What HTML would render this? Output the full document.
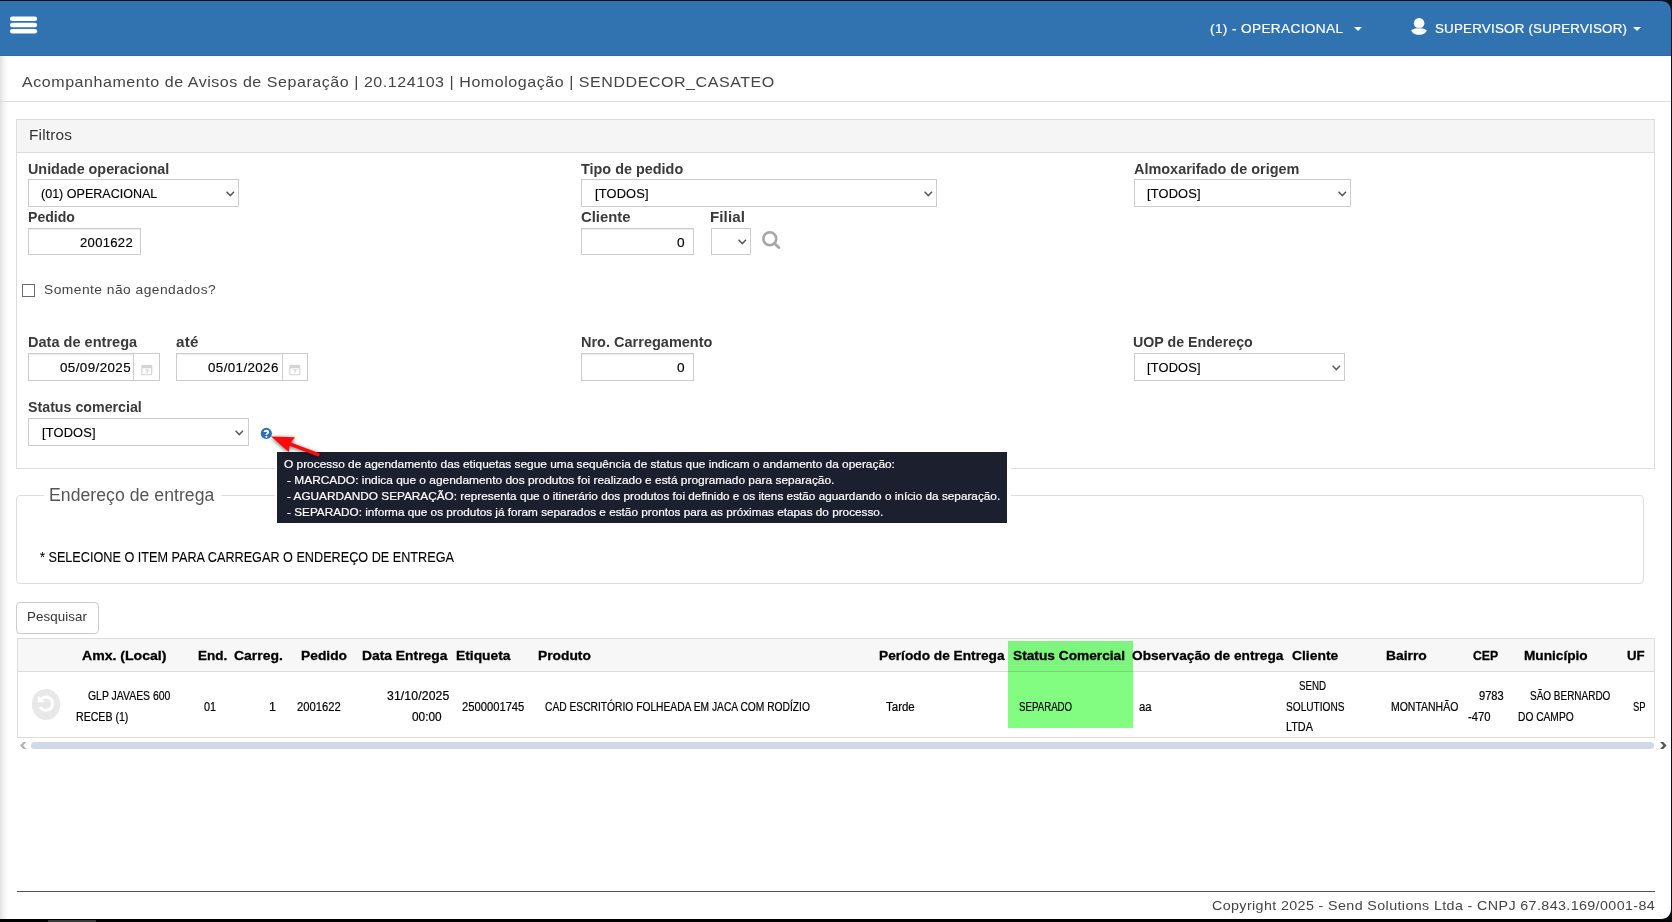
<!DOCTYPE html>
<html lang="pt-br"><head><meta charset="utf-8"><title>Acompanhamento de Avisos de Separação</title>
<style>
html,body{margin:0;padding:0;}
body{width:1672px;height:922px;overflow:hidden;position:relative;background:#fff;font-family:"Liberation Sans",sans-serif;}
.a{position:absolute;box-sizing:border-box;}
.t{position:absolute;white-space:pre;line-height:20px;height:20px;transform-origin:0 50%;font-family:"Liberation Sans",sans-serif;}
.inp{position:absolute;box-sizing:border-box;border:1px solid #ccc;background:#fff;box-shadow:inset 0 1px 1px rgba(0,0,0,.075);}
.sel{position:absolute;box-sizing:border-box;border:1px solid #ccc;background:#fff;}
svg{position:absolute;overflow:visible;}

</style></head><body>
<!-- left shadow -->
<div class="a" style="left:0;top:56px;width:9px;height:863px;background:linear-gradient(to right,#e1e1e1,#f5f5f5 45%,#fff);"></div>
<!-- navbar -->
<div class="a" style="left:0;top:0;width:1672px;height:56px;background:#3173b0;border-bottom:1px solid #2e6da4;"></div>
<!-- hamburger -->
<svg style="left:0;top:0" width="50" height="50"><rect x="10" y="16.4" width="27.1" height="4.6" rx="2.3" fill="#fff"/><rect x="10" y="22.8" width="27.1" height="4.5" rx="2.25" fill="#fff"/><rect x="10" y="29.1" width="27.1" height="4.5" rx="2.25" fill="#fff"/></svg>
<!-- carets -->
<svg style="left:1354.3px;top:26.8px" width="8" height="4"><path d="M0 0H8L4 4Z" fill="#fff"/></svg>
<svg style="left:1633.3px;top:26.8px" width="8" height="4"><path d="M0 0H8L4 4Z" fill="#fff"/></svg>
<!-- user icon -->
<svg style="left:1411px;top:17px" width="16" height="18" viewBox="0 0 16 18"><circle cx="8.1" cy="6.2" r="5.3" fill="#fff"/><path d="M0.2 13.3C2 11.8 4.5 10.9 8 10.9S14 11.8 15.8 13.3C15 16 12.5 17.8 8 17.8S1 16 0.2 13.3Z" fill="#fff"/><path d="M3.2 9.9C5 11.6 11 11.6 12.8 9.9" stroke="#3173b0" stroke-width="0.9" fill="none" opacity=".55"/></svg>
<!-- title rule -->
<div class="a" style="left:0;top:101px;width:1671px;height:1px;background:#ddd;"></div>
<!-- Filtros panel -->
<div class="a" style="left:16px;top:119px;width:1639px;height:350px;border:1px solid #ddd;background:#fff;"></div>
<div class="a" style="left:17px;top:120px;width:1637px;height:33px;background:#f5f5f5;border-bottom:1px solid #ddd;"></div>
<!-- row 1 -->
<div class="sel" style="left:28px;top:179px;width:211px;height:28px;"></div>
<div class="sel" style="left:581px;top:179px;width:356px;height:28px;"></div>
<div class="sel" style="left:1134px;top:179px;width:217px;height:28px;"></div>
<!-- row 2 -->
<div class="inp" style="left:28px;top:228px;width:113px;height:27px;"></div>
<div class="inp" style="left:581px;top:228px;width:113px;height:27px;"></div>
<div class="sel" style="left:711px;top:228px;width:40px;height:27px;"></div>
<!-- checkbox -->
<div class="a" style="left:22px;top:284px;width:13px;height:13px;border:1px solid #6a6a6a;border-radius:0.5px;background:#fff;"></div>
<!-- row 3 -->
<div class="inp" style="left:28px;top:353px;width:132px;height:28px;"></div>
<div class="a" style="left:133px;top:354px;width:26px;height:26px;background:#fff;border-left:1px solid #ccc;"></div>
<div class="inp" style="left:176px;top:353px;width:132px;height:28px;"></div>
<div class="a" style="left:282px;top:354px;width:25px;height:26px;background:#fff;border-left:1px solid #ccc;"></div>
<div class="inp" style="left:581px;top:353px;width:113px;height:28px;"></div>
<div class="sel" style="left:1134px;top:353px;width:211px;height:28px;"></div>
<!-- row 4 -->
<div class="sel" style="left:28px;top:418px;width:221px;height:28px;"></div>
<!-- chevrons -->
<svg class="chev" style="left:226px;top:191px" width="9" height="6"><path d="M0.6 0.8L4.3 4.6L8 0.8" stroke="#5a5a5a" stroke-width="1.45" fill="none"/></svg>
<svg class="chev" style="left:923.6px;top:191px" width="9" height="6"><path d="M0.6 0.8L4.3 4.6L8 0.8" stroke="#5a5a5a" stroke-width="1.45" fill="none"/></svg>
<svg class="chev" style="left:1337.8px;top:191px" width="9" height="6"><path d="M0.6 0.8L4.3 4.6L8 0.8" stroke="#5a5a5a" stroke-width="1.45" fill="none"/></svg>
<svg class="chev" style="left:737.6px;top:239px" width="9" height="6"><path d="M0.6 0.8L4.3 4.6L8 0.8" stroke="#5a5a5a" stroke-width="1.45" fill="none"/></svg>
<svg class="chev" style="left:1331.6px;top:365px" width="9" height="6"><path d="M0.6 0.8L4.3 4.6L8 0.8" stroke="#5a5a5a" stroke-width="1.45" fill="none"/></svg>
<svg class="chev" style="left:235.4px;top:430px" width="9" height="6"><path d="M0.6 0.8L4.3 4.6L8 0.8" stroke="#5a5a5a" stroke-width="1.45" fill="none"/></svg>
<!-- magnifier -->
<svg style="left:760px;top:229px" width="22" height="22" viewBox="0 0 22 22"><circle cx="9.8" cy="9.7" r="6.45" stroke="#a9a6ab" stroke-width="2.6" fill="none"/><path d="M14.6 14.5L18.8 18.5" stroke="#a9a6ab" stroke-width="2.9" stroke-linecap="round"/></svg>
<!-- calendar icons -->
<svg style="left:140.6px;top:363.7px" width="11.6" height="11.6" viewBox="0 0 12 12"><rect x="0.9" y="1.7" width="10.2" height="9.4" rx="0.6" fill="#fff" stroke="#d2d2d2" stroke-width="1.1"/><rect x="0.9" y="1.7" width="10.2" height="2.7" fill="#d4d4d4"/><rect x="2.7" y="0.5" width="1.7" height="2.2" rx="0.6" fill="#d8d8d8"/><rect x="7.6" y="0.5" width="1.7" height="2.2" rx="0.6" fill="#d8d8d8"/><path d="M4.4 6.1H7.5L5.7 9.6" stroke="#d6d6d6" stroke-width="1.1" fill="none"/></svg>
<svg style="left:288.7px;top:363.7px" width="11.6" height="11.6" viewBox="0 0 12 12"><rect x="0.9" y="1.7" width="10.2" height="9.4" rx="0.6" fill="#fff" stroke="#d2d2d2" stroke-width="1.1"/><rect x="0.9" y="1.7" width="10.2" height="2.7" fill="#d4d4d4"/><rect x="2.7" y="0.5" width="1.7" height="2.2" rx="0.6" fill="#d8d8d8"/><rect x="7.6" y="0.5" width="1.7" height="2.2" rx="0.6" fill="#d8d8d8"/><path d="M4.4 6.1H7.5L5.7 9.6" stroke="#d6d6d6" stroke-width="1.1" fill="none"/></svg>
<!-- help icon -->
<svg style="left:260px;top:427px" width="13" height="13" viewBox="0 0 13 13"><circle cx="6.3" cy="6.4" r="5.6" fill="#2d72b3"/><path d="M4.5 5.1C4.5 3.3 8.2 3.3 8.2 5.2C8.2 6.5 6.4 6.4 6.4 7.8" stroke="#fff" stroke-width="1.8" fill="none"/><circle cx="6.4" cy="9.8" r="1" fill="#fff"/></svg>
<!-- fieldset -->
<div class="a" style="left:16px;top:495px;width:1628px;height:89px;border:1px solid #ddd;border-radius:4px;"></div>
<div class="a" style="left:43.5px;top:494px;width:177px;height:3px;background:#fff;"></div>
<!-- Pesquisar button -->
<div class="a" style="left:16px;top:602px;width:83px;height:32px;border:1px solid #ccc;border-radius:4px;background:#fff;"></div>
<!-- table -->
<div class="a" style="left:17px;top:638px;width:1638px;height:100px;border:1px solid #ddd;background:#fff;"></div>
<div class="a" style="left:18px;top:639px;width:1636px;height:33px;background:#f7f7f7;border-bottom:1px solid #ddd;"></div>
<!-- green highlight -->
<div class="a" style="left:1008px;top:641px;width:125px;height:87px;background:#82fd82;mix-blend-mode:multiply;"></div>
<!-- undo icon -->
<svg style="left:31px;top:688px" width="30" height="33" viewBox="0 0 30 33"><ellipse cx="15" cy="16.5" rx="14.1" ry="15.6" fill="#e8e8e8"/><path d="M8.8 13.3A6.6 6.6 0 1 1 9.2 18.9" stroke="#fff" stroke-width="3" fill="none"/><path d="M6.9 7.6V14.2H13.7Z" fill="#fff"/></svg>
<!-- scrollbar -->
<div class="a" style="left:31px;top:742px;width:1623px;height:7px;border-radius:3.5px;background:#d0dae4;"></div>
<svg style="left:20px;top:742px" width="7" height="7"><path d="M6.4 0H3.3L0 3.5L3.3 7H6.4L3.1 3.5Z" fill="#b2b2b2"/></svg>
<svg style="left:1659.6px;top:742px" width="7" height="7"><path d="M0 0H3.2L6.6 3.5L3.2 7H0L3.4 3.5Z" fill="#555"/></svg>
<!-- footer rule -->
<div class="a" style="left:17px;top:891px;width:1638px;height:1px;background:#555;"></div>
<!-- tooltip -->
<div class="a" style="left:275px;top:452px;width:736px;height:71px;background:#fff;"></div>
<div class="a" style="left:277px;top:452px;width:730px;height:70.6px;background:#1c1f2e;"></div>
<!-- red arrow -->
<svg style="left:0;top:0;filter:drop-shadow(0.5px 1.5px 2.2px rgba(0,0,0,.6))" width="400" height="500" viewBox="0 0 400 500"><path d="M271.1 436.5L295 437.3L290.8 442.6L318.6 453.1A1.7 1.7 0 0 1 317.4 456.3L289.4 445.7L288.8 452Z" fill="#ff0a0a"/></svg>
<!-- window frame -->
<div class="a" style="left:0;top:0;width:1672px;height:1px;background:#0c0f1c;"></div>
<div class="a" style="left:0;top:919px;width:1672px;height:3px;background:#000;"></div>
<div class="a" style="left:48px;top:920px;width:48px;height:2px;background:#3a3a3a;"></div>
<div class="a" style="left:1671px;top:0;width:1px;height:922px;background:#0c0f1c;"></div>
<svg style="left:1661px;top:0" width="11" height="11"><path d="M0 0H11V11H10C10 5 6 1 0 1Z" fill="#0c0f1c"/></svg>
<svg style="left:1661px;top:909px" width="11" height="11"><path d="M11 0V11H0V10C6 10 10 6 10 0Z" fill="#0a0c16"/></svg>

<div class="t" style="left:1210.06px;top:19px;font-size:13px;color:#fff;-webkit-text-stroke:0.2px #fff;letter-spacing:0.348px;transform:scaleX(1.0485);">(1) - OPERACIONAL</div>
<div class="t" style="left:1435.40px;top:19px;font-size:13px;color:#fff;-webkit-text-stroke:0.2px #fff;letter-spacing:0.215px;transform:scaleX(1.0268);">SUPERVISOR (SUPERVISOR)</div>
<div class="t" style="left:21.57px;top:72px;font-size:15px;color:#444;letter-spacing:0.513px;transform:scaleX(1.0679);">Acompanhamento de Avisos de Separação | 20.124103 | Homologação | SENDDECOR_CASATEO</div>
<div class="t" style="left:28.74px;top:125px;font-size:15px;color:#333;letter-spacing:0.165px;transform:scaleX(1.0260);">Filtros</div>
<div class="t" style="left:27.84px;top:159px;font-size:15px;color:#3a3a3a;font-weight:700;transform:scaleX(0.9568);">Unidade operacional</div>
<div class="t" style="left:581.34px;top:159px;font-size:15px;color:#3a3a3a;font-weight:700;transform:scaleX(0.9608);">Tipo de pedido</div>
<div class="t" style="left:1133.54px;top:159px;font-size:15px;color:#3a3a3a;font-weight:700;transform:scaleX(0.9630);">Almoxarifado de origem</div>
<div class="t" style="left:27.76px;top:207px;font-size:15px;color:#3a3a3a;font-weight:700;transform:scaleX(0.9396);">Pedido</div>
<div class="t" style="left:580.89px;top:207px;font-size:15px;color:#3a3a3a;font-weight:700;transform:scaleX(0.9900);">Cliente</div>
<div class="t" style="left:710.39px;top:207px;font-size:15px;color:#3a3a3a;font-weight:700;letter-spacing:0.067px;transform:scaleX(1.0106);">Filial</div>
<div class="t" style="left:27.73px;top:332px;font-size:15px;color:#3a3a3a;font-weight:700;transform:scaleX(0.9701);">Data de entrega</div>
<div class="t" style="left:175.85px;top:332px;font-size:15px;color:#3a3a3a;font-weight:700;letter-spacing:0.188px;transform:scaleX(1.0184);">até</div>
<div class="t" style="left:580.53px;top:332px;font-size:15px;color:#3a3a3a;font-weight:700;transform:scaleX(0.9673);">Nro. Carregamento</div>
<div class="t" style="left:1133.15px;top:332px;font-size:15px;color:#3a3a3a;font-weight:700;transform:scaleX(0.9468);">UOP de Endereço</div>
<div class="t" style="left:28.29px;top:397px;font-size:15px;color:#3a3a3a;font-weight:700;transform:scaleX(0.9480);">Status comercial</div>
<div class="t" style="left:41.20px;top:184px;font-size:12.6px;color:#000;-webkit-text-stroke:0.15px #000;transform:scaleX(0.9955);">(01) OPERACIONAL</div>
<div class="t" style="left:594.56px;top:184px;font-size:12.6px;color:#000;-webkit-text-stroke:0.15px #000;letter-spacing:0.162px;transform:scaleX(1.0199);">[TODOS]</div>
<div class="t" style="left:1147.46px;top:184px;font-size:12.6px;color:#000;-webkit-text-stroke:0.15px #000;letter-spacing:0.162px;transform:scaleX(1.0199);">[TODOS]</div>
<div class="t" style="left:79.52px;top:233px;font-size:12.6px;color:#000;-webkit-text-stroke:0.15px #000;letter-spacing:0.288px;transform:scaleX(1.0374);">2001622</div>
<div class="t" style="left:677.25px;top:233px;font-size:12.6px;color:#000;-webkit-text-stroke:0.15px #000;transform:scaleX(1.0839);">0</div>
<div class="t" style="left:59.86px;top:358px;font-size:12.6px;color:#000;-webkit-text-stroke:0.15px #000;letter-spacing:0.395px;transform:scaleX(1.0607);">05/09/2025</div>
<div class="t" style="left:208.16px;top:358px;font-size:12.6px;color:#000;-webkit-text-stroke:0.15px #000;letter-spacing:0.381px;transform:scaleX(1.0585);">05/01/2026</div>
<div class="t" style="left:677.25px;top:358px;font-size:12.6px;color:#000;-webkit-text-stroke:0.15px #000;transform:scaleX(1.0839);">0</div>
<div class="t" style="left:1147.46px;top:358px;font-size:12.6px;color:#000;-webkit-text-stroke:0.15px #000;letter-spacing:0.162px;transform:scaleX(1.0199);">[TODOS]</div>
<div class="t" style="left:41.76px;top:423px;font-size:12.6px;color:#000;-webkit-text-stroke:0.15px #000;letter-spacing:0.162px;transform:scaleX(1.0199);">[TODOS]</div>
<div class="t" style="left:44.07px;top:280px;font-size:13px;color:#444;letter-spacing:0.429px;transform:scaleX(1.0632);">Somente não agendados?</div>
<div class="t" style="left:48.76px;top:485px;font-size:17.5px;color:#555;letter-spacing:0.052px;transform:scaleX(1.0058);">Endereço de entrega</div>
<div class="t" style="left:39.64px;top:547px;font-size:15.5px;color:#000;-webkit-text-stroke:0.1px #000;transform:scaleX(0.8164);">* SELECIONE O ITEM PARA CARREGAR O ENDEREÇO DE ENTREGA</div>
<div class="t" style="left:27.01px;top:607px;font-size:13.2px;color:#333;letter-spacing:0.077px;transform:scaleX(1.0109);">Pesquisar</div>
<div class="t" style="left:283.65px;top:454px;font-size:11px;color:#fff;-webkit-text-stroke:0.2px #fff;transform:scaleX(1.0800);">O processo de agendamento das etiquetas segue uma sequência de status que indicam o andamento da operação:</div>
<div class="t" style="left:287.28px;top:470px;font-size:11px;color:#fff;-webkit-text-stroke:0.2px #fff;transform:scaleX(1.0825);">- MARCADO: indica que o agendamento dos produtos foi realizado e está programado para separação.</div>
<div class="t" style="left:287.28px;top:486px;font-size:11px;color:#fff;-webkit-text-stroke:0.2px #fff;transform:scaleX(1.0714);">- AGUARDANDO SEPARAÇÃO: representa que o itinerário dos produtos foi definido e os itens estão aguardando o início da separação.</div>
<div class="t" style="left:287.28px;top:502px;font-size:11px;color:#fff;-webkit-text-stroke:0.2px #fff;transform:scaleX(1.0695);">- SEPARADO: informa que os produtos já foram separados e estão prontos para as próximas etapas do processo.</div>
<div class="t" style="left:81.91px;top:646px;font-size:13px;color:#000;font-weight:700;-webkit-text-stroke:0.3px #000;transform:scaleX(1.0822);">Amx. (Local)</div>
<div class="t" style="left:197.65px;top:646px;font-size:13px;color:#000;font-weight:700;-webkit-text-stroke:0.3px #000;transform:scaleX(1.0372);">End.</div>
<div class="t" style="left:234.49px;top:646px;font-size:13px;color:#000;font-weight:700;-webkit-text-stroke:0.3px #000;transform:scaleX(1.0743);">Carreg.</div>
<div class="t" style="left:301.44px;top:646px;font-size:13px;color:#000;font-weight:700;-webkit-text-stroke:0.3px #000;transform:scaleX(1.0623);">Pedido</div>
<div class="t" style="left:362.33px;top:646px;font-size:13px;color:#000;font-weight:700;-webkit-text-stroke:0.3px #000;transform:scaleX(1.0650);">Data Entrega</div>
<div class="t" style="left:455.54px;top:646px;font-size:13px;color:#000;font-weight:700;-webkit-text-stroke:0.3px #000;transform:scaleX(1.0628);">Etiqueta</div>
<div class="t" style="left:538.24px;top:646px;font-size:13px;color:#000;font-weight:700;-webkit-text-stroke:0.3px #000;transform:scaleX(1.0605);">Produto</div>
<div class="t" style="left:879.14px;top:646px;font-size:13px;color:#000;font-weight:700;-webkit-text-stroke:0.3px #000;transform:scaleX(1.0538);">Período de Entrega</div>
<div class="t" style="left:1013.06px;top:646px;font-size:13px;color:#000;font-weight:700;-webkit-text-stroke:0.3px #000;transform:scaleX(1.0551);">Status Comercial</div>
<div class="t" style="left:1132.20px;top:646px;font-size:13px;color:#000;font-weight:700;-webkit-text-stroke:0.3px #000;transform:scaleX(1.0526);">Observação de entrega</div>
<div class="t" style="left:1291.89px;top:646px;font-size:13px;color:#000;font-weight:700;-webkit-text-stroke:0.3px #000;transform:scaleX(1.0664);">Cliente</div>
<div class="t" style="left:1385.53px;top:646px;font-size:13px;color:#000;font-weight:700;-webkit-text-stroke:0.3px #000;transform:scaleX(1.0666);">Bairro</div>
<div class="t" style="left:1472.54px;top:646px;font-size:13px;color:#000;font-weight:700;-webkit-text-stroke:0.3px #000;transform:scaleX(0.9441);">CEP</div>
<div class="t" style="left:1523.74px;top:646px;font-size:13px;color:#000;font-weight:700;-webkit-text-stroke:0.3px #000;transform:scaleX(1.0504);">Município</div>
<div class="t" style="left:1627.16px;top:646px;font-size:13px;color:#000;font-weight:700;-webkit-text-stroke:0.3px #000;transform:scaleX(1.0191);">UF</div>
<div class="t" style="left:87.96px;top:686px;font-size:12px;color:#000;-webkit-text-stroke:0.2px #000;transform:scaleX(0.8694);">GLP JAVAES 600</div>
<div class="t" style="left:75.62px;top:707px;font-size:12px;color:#000;-webkit-text-stroke:0.2px #000;transform:scaleX(0.8821);">RECEB (1)</div>
<div class="t" style="left:204.37px;top:697px;font-size:12px;color:#000;-webkit-text-stroke:0.2px #000;transform:scaleX(0.9037);">01</div>
<div class="t" style="left:269.15px;top:697px;font-size:12px;color:#000;-webkit-text-stroke:0.2px #000;transform:scaleX(1.0394);">1</div>
<div class="t" style="left:296.73px;top:697px;font-size:12px;color:#000;-webkit-text-stroke:0.2px #000;transform:scaleX(0.9341);">2001622</div>
<div class="t" style="left:386.64px;top:686px;font-size:12px;color:#000;-webkit-text-stroke:0.2px #000;letter-spacing:0.120px;transform:scaleX(1.0185);">31/10/2025</div>
<div class="t" style="left:412.44px;top:707px;font-size:12px;color:#000;-webkit-text-stroke:0.2px #000;transform:scaleX(0.9866);">00:00</div>
<div class="t" style="left:462.13px;top:697px;font-size:12px;color:#000;-webkit-text-stroke:0.2px #000;transform:scaleX(0.9340);">2500001745</div>
<div class="t" style="left:545.06px;top:697px;font-size:12px;color:#000;-webkit-text-stroke:0.2px #000;transform:scaleX(0.8545);">CAD ESCRITÓRIO FOLHEADA EM JACA COM RODÍZIO</div>
<div class="t" style="left:886.24px;top:697px;font-size:12px;color:#000;-webkit-text-stroke:0.2px #000;transform:scaleX(0.9583);">Tarde</div>
<div class="t" style="left:1019.24px;top:697px;font-size:12px;color:#000;-webkit-text-stroke:0.2px #000;transform:scaleX(0.8077);">SEPARADO</div>
<div class="t" style="left:1138.51px;top:697px;font-size:12px;color:#000;-webkit-text-stroke:0.2px #000;transform:scaleX(0.9426);">aa</div>
<div class="t" style="left:1298.54px;top:676px;font-size:12px;color:#000;-webkit-text-stroke:0.2px #000;transform:scaleX(0.8111);">SEND</div>
<div class="t" style="left:1286.12px;top:697px;font-size:12px;color:#000;-webkit-text-stroke:0.2px #000;transform:scaleX(0.8442);">SOLUTIONS</div>
<div class="t" style="left:1285.70px;top:717px;font-size:12px;color:#000;-webkit-text-stroke:0.2px #000;transform:scaleX(0.9038);">LTDA</div>
<div class="t" style="left:1391.23px;top:697px;font-size:12px;color:#000;-webkit-text-stroke:0.2px #000;transform:scaleX(0.8726);">MONTANHÃO</div>
<div class="t" style="left:1479.27px;top:686px;font-size:12px;color:#000;-webkit-text-stroke:0.2px #000;transform:scaleX(0.9259);">9783</div>
<div class="t" style="left:1467.79px;top:707px;font-size:12px;color:#000;-webkit-text-stroke:0.2px #000;transform:scaleX(0.9385);">-470</div>
<div class="t" style="left:1530.23px;top:686px;font-size:12px;color:#000;-webkit-text-stroke:0.2px #000;transform:scaleX(0.8312);">SÃO BERNARDO</div>
<div class="t" style="left:1518.05px;top:707px;font-size:12px;color:#000;-webkit-text-stroke:0.2px #000;transform:scaleX(0.8518);">DO CAMPO</div>
<div class="t" style="left:1633.45px;top:697px;font-size:12px;color:#000;-webkit-text-stroke:0.2px #000;transform:scaleX(0.7847);">SP</div>
<div class="t" style="left:1211.77px;top:896px;font-size:13.5px;color:#444;letter-spacing:0.359px;transform:scaleX(1.0587);">Copyright 2025 - Send Solutions Ltda - CNPJ 67.843.169/0001-84</div>
</body></html>
